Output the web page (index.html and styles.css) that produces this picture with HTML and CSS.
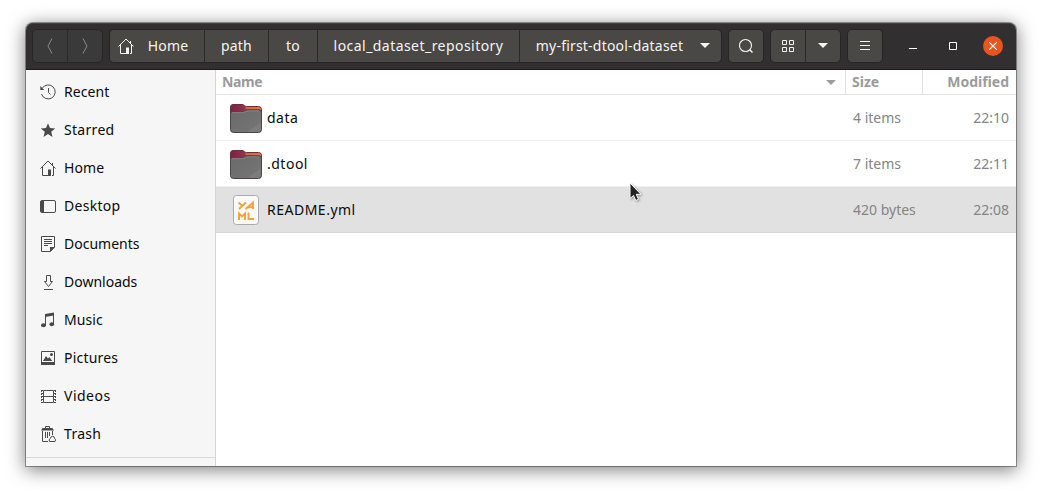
FILE: index.html
```
<!DOCTYPE html>
<html lang="en">
<head>
<meta charset="utf-8">
<title>my-first-dtool-dataset</title>
<link rel="stylesheet" href="styles.css">
</head>
<body>
<svg class="defs" width="0" height="0">
  <defs>
    <linearGradient id="tab" x1="0" x2="1"><stop offset="0" stop-color="#7b2148"/><stop offset=".42" stop-color="#93304a"/><stop offset="1" stop-color="#e06c38"/></linearGradient>
    <linearGradient id="front" x1="0" y1="0" x2="1" y2="1"><stop offset="0" stop-color="#6a6a6a"/><stop offset=".76" stop-color="#737373"/><stop offset=".77" stop-color="#7c7c7c"/><stop offset="1" stop-color="#7a7a7a"/></linearGradient>
    <symbol id="house" viewBox="0 0 16 16"><path d="M.5 8.500 8 1l7.500 7.500M2.500 7v8.500h6M13.500 7v8.500h-1.500M12.500 5V3" fill="none" stroke="currentColor"/><path d="M8 9.500h3V16H8z" fill="currentColor"/></symbol>
    <symbol id="folder" viewBox="0 0 34 30"><path d="M1.500 10V4q0-2.500 2.500-2.500h9q1.500 0 2.300 1T17.500 3.500H29.500q3 0 3 3V12h-31z" fill="url(#tab)" stroke="#6b3036"/><path d="M16.500 5h13q1.800 0 2 2" fill="none" stroke="#ea7440" stroke-width="1.400"/><path d="M1.500 10.500q0-2 2-2h9.500q1.500 0 2.700-.9T18.500 6.800H30q2.500 0 2.500 2.500V26.500q0 3-3 3h-25q-3 0-3-3z" fill="url(#front)" stroke="#4b4345"/><path d="M3 9.700h10.500q1.500 0 2.700-.9T19 7.900h11" fill="none" stroke="#898989" stroke-width=".8"/></symbol>
  </defs>
</svg>
<main class="window">
  <header class="header">
    <div class="group nav">
      <button class="btn"><svg width="8" height="16" viewBox="0 0 8 16"><path d="M6 .5 2 8l4 7.500" fill="none" stroke="currentColor"/></svg></button>
      <button class="btn"><svg width="8" height="16" viewBox="0 0 8 16"><path d="M2 .5 6 8l-4 7.500" fill="none" stroke="currentColor"/></svg></button>
    </div>
    <nav class="group path">
      <button class="btn crumb crumb-home"><svg width="16" height="16"><use href="#house"/></svg><span>Home</span></button>
      <button class="btn crumb crumb-path">path</button>
      <button class="btn crumb crumb-to">to</button>
      <button class="btn crumb crumb-repo">local_dataset_repository</button>
      <button class="btn crumb crumb-current"><span>my-first-dtool-dataset</span><svg width="10" height="5"><path d="M0 0h10L5 5z" fill="currentColor"/></svg></button>
    </nav>
    <div class="group search"><button class="btn"><svg width="16" height="16" viewBox="0 0 16 16"><circle cx="7.500" cy="7.500" r="6" fill="none" stroke="currentColor" stroke-width="1.100"/><path d="M11.800 11.800l2.700 2.700" stroke="currentColor" stroke-width="1.500"/></svg></button></div>
    <div class="group view">
      <button class="btn"><svg width="12" height="12" viewBox="0 0 12 12"><path d="M.5.5h4v4h-4zM7.500.5h4v4h-4zM.5 7.500h4v4h-4zM7.500 7.500h4v4h-4z" fill="none" stroke="currentColor"/></svg></button>
      <button class="btn"><svg width="10" height="5"><path d="M0 0h10L5 5z" fill="currentColor"/></svg></button>
    </div>
    <div class="group menu"><button class="btn"><svg width="10" height="10" viewBox="0 0 10 10"><path d="M0 .5h10M0 4.500h10M0 8.500h10" stroke="currentColor"/></svg></button></div>
    <div class="controls">
      <svg width="8" height="8"><path d="M0 6.500h8" stroke="currentColor"/></svg>
      <svg width="8" height="8"><path d="M.5.5h7v7h-7z" fill="none" stroke="currentColor"/></svg>
      <svg width="20" height="20" viewBox="0 0 20 20"><circle cx="10" cy="10" r="10" fill="#e95420"/><path d="M6.300 6.300l7.400 7.400M13.700 6.300l-7.400 7.400" stroke="currentColor" stroke-width="1.200"/></svg>
    </div>
  </header>
  <div class="body">
    <aside class="sidebar">
      <ul class="places">
        <li><svg viewBox="0 0 16 16"><path d="M2.200 4.300A7 7 0 1 1 1.500 10M8.500 4v4.500l2 2" fill="none" stroke="currentColor"/><path d="M.3 2v4h4z" fill="currentColor"/></svg><span>Recent</span></li>
        <li><svg viewBox="0 0 16 16"><path d="M8 1.200l2 4.900 5.200.3-4 3.400 1.300 5.100L8 12.100l-4.500 2.800 1.300-5.100-4-3.400 5.200-.3z" fill="currentColor"/></svg><span class="w3">Starred</span></li>
        <li><svg><use href="#house"/></svg><span>Home</span></li>
        <li><svg viewBox="0 0 16 16"><rect x=".5" y="2.500" width="15" height="12" rx="1.500" fill="none" stroke="currentColor"/><path d="M1 3h3v11H1z" fill="currentColor"/></svg><span class="w3">Desktop</span></li>
        <li><svg viewBox="0 0 16 16"><path d="M1.500.5h13v10.500l-4 4.500h-9z" fill="none" stroke="currentColor"/><path d="M4 3.500h8M4 5.500h8M4 7.500h8M4 9.500h4" stroke="currentColor"/><path d="M10 11h5l-5 5z" fill="currentColor"/></svg><span class="w0">Documents</span></li>
        <li><svg viewBox="0 0 16 16"><path d="M6.500 1.500h4v6h2l-4 5-4-5h2zM4 15.500h9" fill="none" stroke="currentColor"/></svg><span class="w0">Downloads</span></li>
        <li><svg viewBox="0 0 16 16"><path d="M5.500 13V3.200L13.500 2v10" fill="none" stroke="currentColor"/><path d="M5 2l9-1.500v3L5 5z" fill="currentColor"/><ellipse cx="3.500" cy="13.300" rx="2.500" ry="2" fill="currentColor"/><ellipse cx="11.800" cy="12.300" rx="2.300" ry="2" fill="currentColor"/></svg><span>Music</span></li>
        <li><svg viewBox="0 0 16 16"><path d="M1.500 1.500h13v12h-13z" fill="none" stroke="currentColor"/><path d="M1 12h14v3H1zM3 11l3-5 2 2.500L9.300 7l3 4z" fill="currentColor"/><circle cx="11.500" cy="4.500" r="1.500" fill="currentColor"/></svg><span class="w2">Pictures</span></li>
        <li><svg viewBox="0 0 16 16"><path d="M3.500 2.500h10v12h-10zM4 8.500h9" fill="none" stroke="currentColor"/><path d="M1.500 2v13M15.500 2v13" stroke="currentColor" stroke-dasharray="2 1"/><path d="M1 2.500h2M1 5.500h2M1 8.500h2M1 11.500h2M1 14.500h2M14 2.500h2M14 5.500h2M14 8.500h2M14 11.500h2M14 14.500h2" stroke="currentColor"/></svg><span class="w5">Videos</span></li>
        <li><svg viewBox="0 0 16 16"><path d="M5.500 2V.5h4V2M2.500 5v10.500H8M5.500 6v6M7.500 6v6M9.500 6v4M12.500 5v4" fill="none" stroke="currentColor"/><path d="M1 4.500 2.500 2h10L14 4.500z" fill="currentColor"/><path d="M9.500 15.500q-1.500-2 1-3.200 0-2 2-2t2 2q2 1.500.5 3.200z" fill="#f6f6f6" stroke="currentColor"/></svg><span class="w3">Trash</span></li>
      </ul>
    </aside>
    <section class="files">
      <div class="row columns">
        <div class="name"><span>Name</span><svg width="10" height="5"><path d="M0 0h10L5 5z" fill="currentColor"/></svg></div>
        <div class="size">Size</div>
        <div class="modified">Modified</div>
      </div>
      <div class="row file">
        <div class="name"><svg width="34" height="30"><use href="#folder"/></svg><span class="w5">data</span></div>
        <div class="size">4 items</div><div class="modified">22:10</div>
      </div>
      <div class="row file">
        <div class="name"><svg width="34" height="30"><use href="#folder"/></svg><span class="w5">.dtool</span></div>
        <div class="size">7 items</div><div class="modified">22:11</div>
      </div>
      <div class="row file selected">
        <div class="name"><svg width="34" height="32" viewBox="0 0 34 32"><rect x="4.500" y="1.500" width="25" height="29" rx="3" fill="#fafafa" stroke="#aaa"/><g fill="none" stroke="#f3a13c" stroke-width="1.900"><path d="M9.500 8.500l4 3.500M17 8.500l-7 6.500M16.500 15 24 8.500V15M19 13.200h5"/><path d="M10 26v-6.500l3 3 3-3V26M19.500 18.500V25H25"/></g></svg><span class="w5">README.yml</span></div>
        <div class="size">420 bytes</div><div class="modified">22:08</div>
      </div>
    </section>
  </div>
</main>
<svg class="cursor" width="14" height="22" viewBox="0 0 14 22"><path d="M1 1v15.500l3.500-3 2.300 5 2.700-1.200-2.300-5H12z" fill="#222" stroke="#fff"/></svg>
</body>
</html>
```
FILE: styles.css
```
* { box-sizing: border-box; }
body {
  margin: 0;
  height: 495px;
  padding: 23px 26px 29px;
  overflow: hidden;
  background: #fff;
  color: #0a0a0a;
  font: 14px/20px "Noto Sans", "Open Sans", sans-serif;
}
svg { display: block; flex: none; }
.defs { position: absolute; }
.window {
  display: flex;
  flex-direction: column;
  width: 990px;
  height: 443px;
  border-radius: 7px 7px 0 0;
  background: #fff;
  box-shadow: 0 0 0 1px rgba(0, 0, 0, .35), 0 3px 18px 1px rgba(0, 0, 0, .5);
}
.header {
  display: flex;
  align-items: center;
  height: 47px;
  flex: none;
  padding: 0 13px 1px 6px;
  border-radius: 7px 7px 0 0;
  border-bottom: 1px solid #1d1b1b;
  background: #322f30;
  box-shadow: inset 0 1px #454243;
  color: #fff;
}
.group {
  display: flex;
  height: 34px;
  border: 1px solid #262424;
  border-radius: 5px;
  background: #4a4845;
  overflow: hidden;
}
.btn {
  display: flex;
  align-items: center;
  justify-content: center;
  flex: 1;
  margin: 0;
  padding: 0;
  border: 0;
  background: none;
  color: #f4f4f2;
  font: inherit;
}
.btn + .btn { border-left: 1px solid #2b2928; }
.nav { width: 71px; margin-right: 6px; background: #3b3a3a; }
.nav .btn { color: #8c8b8a; }
.path { width: 613px; margin-right: 6px; }
.crumb { flex: none; letter-spacing: .15px; }
.crumb-home { width: 94px; gap: 14px; padding-right: 8px; }
.crumb-path { width: 64px; }
.crumb-to { width: 49px; }
.crumb-repo { width: 202px; letter-spacing: .45px; }
.crumb-current { flex: 1; gap: 17px; padding-left: 5px; letter-spacing: .2px; }
.search { width: 36px; margin-right: 6px; }
.view { width: 71px; margin-right: 6px; }
.menu { width: 36px; }
.controls { display: flex; flex: 1; align-items: center; justify-content: flex-end; gap: 32px; }
.controls svg:last-child { margin-left: -6px; }
.body { display: flex; flex: 1; min-height: 0; }
.sidebar { width: 190px; border-right: 1px solid #d5d5d5; background: #f6f6f6; }
.places {
  margin: 0;
  padding: 3px 0 4px;
  border-bottom: 1px solid #d9d9d9;
  list-style: none;
}
.places li { display: flex; align-items: center; gap: 8px; height: 38px; padding-left: 14px; }
.places svg { width: 16px; height: 16px; color: #4a4a4a; }
.places span { letter-spacing: .1px; }
.places .w0 { letter-spacing: 0; }
.places .w2 { letter-spacing: .2px; }
.places .w3 { letter-spacing: .3px; }
.places .w5, .file .w5 { letter-spacing: .5px; }
.files { flex: 1; }
.row { display: grid; grid-template-columns: 1fr 77px 94px; border-bottom: 1px solid #f0f0f0; }
.row > div { display: flex; align-items: center; }
.row .modified { justify-content: flex-end; padding-right: 7px; }
.columns { height: 25px; border-color: #e3e3e3; color: #9b9b9b; font-weight: 700; }
.columns .name { justify-content: space-between; padding: 0 9px 0 6px; letter-spacing: -.4px; }
.columns .size { padding-left: 6px; }
.columns > div + div { border-left: 1px solid #e3e3e3; }
.file { height: 46px; color: #848484; }
.file .name { gap: 4px; padding: 0 13px; color: #0a0a0a; }
.file .size { padding-left: 8px; }
.selected { background: #e1e1e1; border-color: #d7d7d7; }
.cursor { position: absolute; left: 629px; top: 182px; filter: drop-shadow(1px 1px 1px rgba(0, 0, 0, .35)); }
```
